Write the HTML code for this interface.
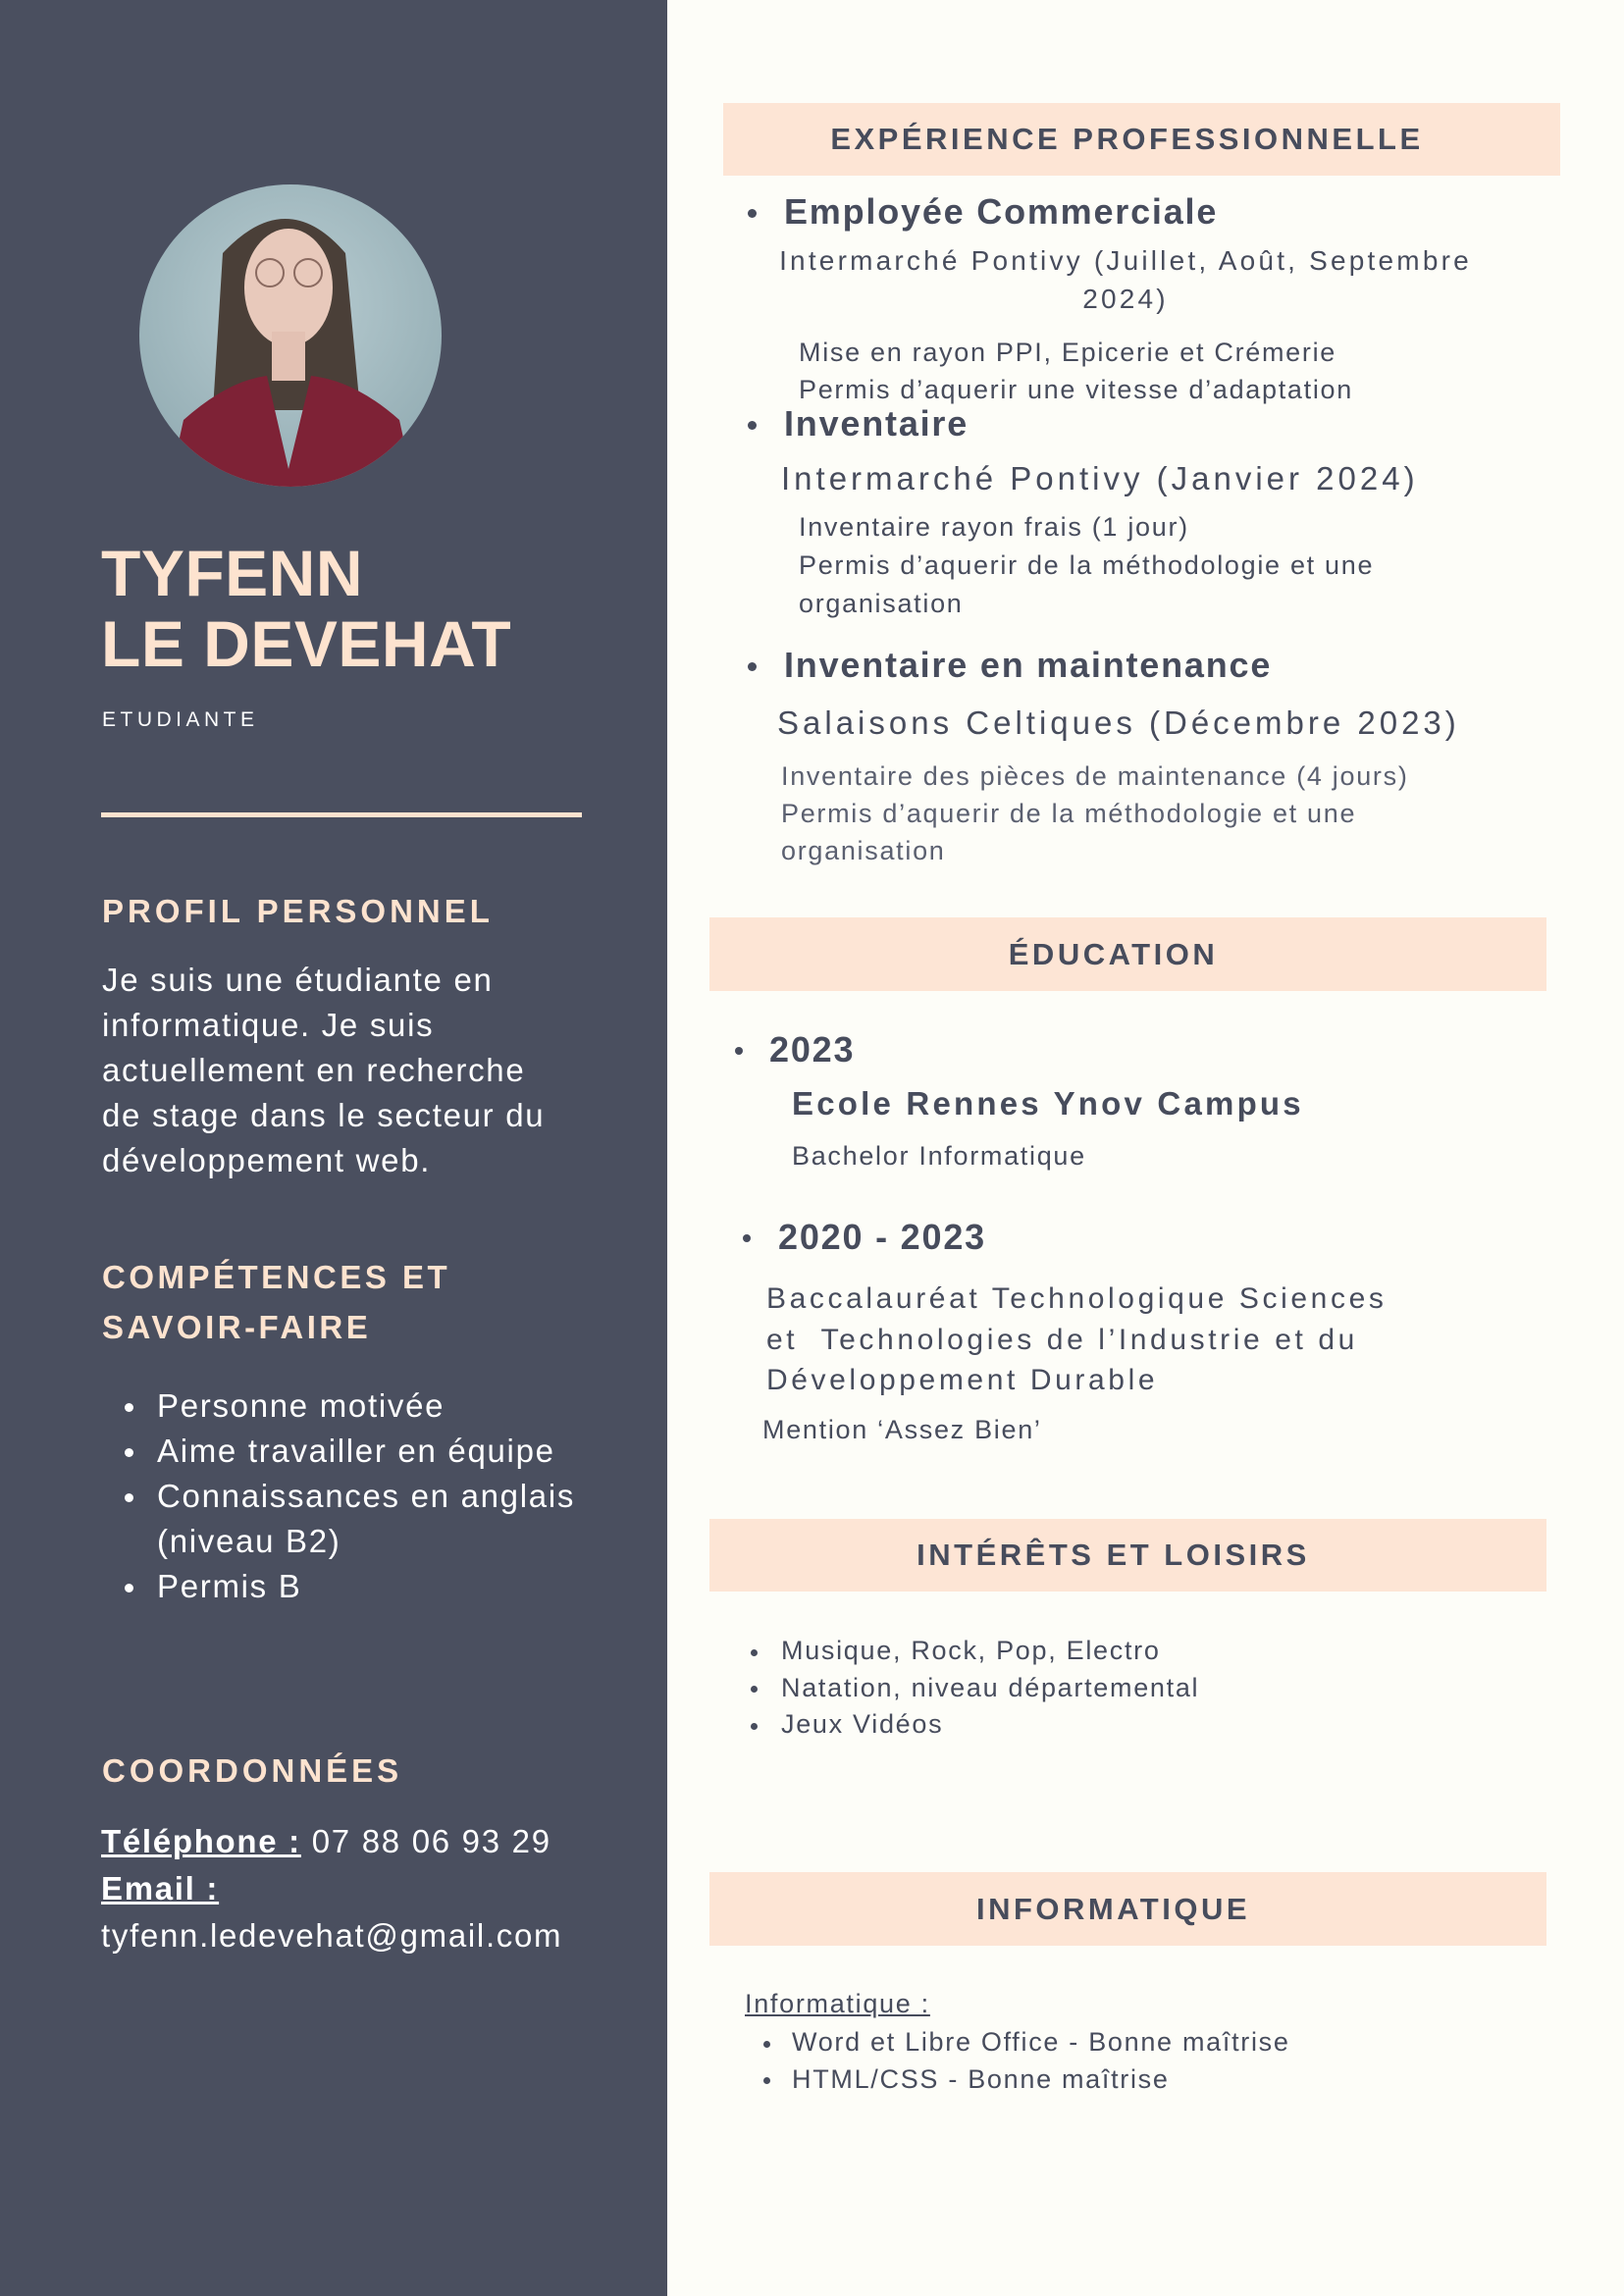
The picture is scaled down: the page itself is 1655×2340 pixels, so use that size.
<!DOCTYPE html>
<html><head><meta charset="utf-8"><style>
*{margin:0;padding:0;box-sizing:border-box}
body{width:1655px;height:2340px;background:#fdfdf8;position:relative;overflow:hidden;font-family:"Liberation Sans",sans-serif;color:#474c5c}
#side{position:absolute;left:0;top:0;width:680px;height:2340px;background:#4a4f5f}
.a{position:absolute;white-space:nowrap}
.t{letter-spacing:1.7px}
.pk{color:#fde3cf}
.w{color:#fff}
.band{position:absolute;background:#fde5d5;text-align:center;font-weight:bold;font-size:31px;letter-spacing:3.5px;color:#474c5c;padding-right:30px}
.h{font-weight:bold;font-size:36px;letter-spacing:1.8px}
.dot{position:absolute;width:9px;height:9px;border-radius:50%;background:#474c5c}
</style></head><body>
<div id="side"></div>
<svg class="a" style="left:142px;top:188px" width="308" height="308" viewBox="0 0 308 308">
<defs><clipPath id="c"><circle cx="154" cy="154" r="154"/></clipPath>
<radialGradient id="g" cx="0.5" cy="0.4" r="0.7"><stop offset="0" stop-color="#b9cdd2"/><stop offset="1" stop-color="#8fa9b0"/></radialGradient></defs>
<g clip-path="url(#c)">
<rect width="308" height="308" fill="url(#g)"/>
<path d="M85 70 Q150 0 210 70 L225 230 L75 230 Z" fill="#4a3f38"/>
<ellipse cx="152" cy="105" rx="45" ry="60" fill="#e8c9bb"/>
<rect x="135" y="150" width="34" height="50" fill="#e3c1b3"/>
<path d="M30 308 L45 240 Q90 200 130 195 L152 290 L175 195 Q220 200 265 240 L280 308 Z" fill="#7e2236"/>
<circle cx="133" cy="90" r="14" fill="none" stroke="#8a6a60" stroke-width="2"/>
<circle cx="172" cy="90" r="14" fill="none" stroke="#8a6a60" stroke-width="2"/>
</g></svg>
<div class="a pk" style="left:103px;top:548px;font-size:66px;font-weight:bold;line-height:72px;letter-spacing:0.5px">TYFENN<br>LE DEVEHAT</div>
<div class="a w" style="left:104px;top:722px;font-size:21px;letter-spacing:4.5px">ETUDIANTE</div>
<div class="a" style="left:103px;top:828px;width:490px;height:5px;background:#fde3cf"></div>
<div class="a pk" style="left:104px;top:910px;font-size:33px;font-weight:bold;letter-spacing:4px">PROFIL PERSONNEL</div>
<div class="a w t" style="left:104px;top:976px;font-size:33px;line-height:46px">Je suis une étudiante en<br>informatique. Je suis<br>actuellement en recherche<br>de stage dans le secteur du<br>développement web.</div>
<div class="a pk" style="left:104px;top:1276px;font-size:33px;font-weight:bold;letter-spacing:3.5px;line-height:51px">COMPÉTENCES ET<br>SAVOIR-FAIRE</div>
<div class="a w t" style="left:160px;top:1410px;font-size:33px;line-height:46px">Personne motivée<br>Aime travailler en équipe<br>Connaissances en anglais<br>(niveau B2)<br>Permis B</div>
<div class="a" style="left:127px;top:1430px;width:9px;height:9px;border-radius:50%;background:#fff"></div>
<div class="a" style="left:127px;top:1476px;width:9px;height:9px;border-radius:50%;background:#fff"></div>
<div class="a" style="left:127px;top:1522px;width:9px;height:9px;border-radius:50%;background:#fff"></div>
<div class="a" style="left:127px;top:1614px;width:9px;height:9px;border-radius:50%;background:#fff"></div>
<div class="a pk" style="left:104px;top:1786px;font-size:33px;font-weight:bold;letter-spacing:4px">COORDONNÉES</div>
<div class="a w t" style="left:103px;top:1853px;font-size:33px;line-height:48px"><b><u>Téléphone :</u></b> 07 88 06 93 29<br><b><u>Email :</u></b><br>tyfenn.ledevehat@gmail.com</div>

<div class="band" style="left:737px;top:105px;width:853px;height:74px;line-height:74px">EXPÉRIENCE PROFESSIONNELLE</div>
<div class="dot" style="left:762px;top:213px"></div>
<div class="a h" style="left:799px;top:195px">Employée Commerciale</div>
<div class="a" style="left:737px;top:246px;width:820px;text-align:center;font-size:28px;letter-spacing:3.2px;line-height:39px;white-space:normal">Intermarché Pontivy (Juillet, Août, Septembre<br>2024)</div>
<div class="a t" style="left:814px;top:340px;font-size:27px;line-height:38px">Mise en rayon PPI, Epicerie et Crémerie<br>Permis d’aquerir une vitesse d’adaptation</div>
<div class="dot" style="left:762px;top:429px"></div>
<div class="a h" style="left:799px;top:411px">Inventaire</div>
<div class="a" style="left:796px;top:469px;font-size:33px;letter-spacing:4px">Intermarché Pontivy (Janvier 2024)</div>
<div class="a t" style="left:814px;top:518px;font-size:27px;line-height:39px">Inventaire rayon frais (1 jour)<br>Permis d’aquerir de la méthodologie et une<br>organisation</div>
<div class="dot" style="left:762px;top:675px"></div>
<div class="a h" style="left:799px;top:657px">Inventaire en maintenance</div>
<div class="a" style="left:792px;top:718px;font-size:33px;letter-spacing:4px">Salaisons Celtiques (Décembre 2023)</div>
<div class="a t" style="left:796px;top:772px;font-size:27px;line-height:38px;color:#5b6070">Inventaire des pièces de maintenance (4 jours)<br>Permis d’aquerir de la méthodologie et une<br>organisation</div>

<div class="band" style="left:723px;top:935px;width:853px;height:75px;line-height:75px">ÉDUCATION</div>
<div class="dot" style="left:749px;top:1067px;width:8px;height:8px"></div>
<div class="a h" style="left:784px;top:1049px">2023</div>
<div class="a" style="left:807px;top:1106px;font-size:33px;font-weight:bold;letter-spacing:3.2px">Ecole Rennes Ynov Campus</div>
<div class="a t" style="left:807px;top:1163px;font-size:27px">Bachelor Informatique</div>
<div class="dot" style="left:757px;top:1258px;width:8px;height:8px"></div>
<div class="a h" style="left:793px;top:1240px">2020 - 2023</div>
<div class="a" style="left:781px;top:1303px;font-size:30px;letter-spacing:3.6px;line-height:41.5px">Baccalauréat Technologique Sciences<br>et&nbsp; Technologies de l’Industrie et du<br>Développement Durable</div>
<div class="a t" style="left:777px;top:1442px;font-size:27px">Mention ‘Assez Bien’</div>

<div class="band" style="left:723px;top:1548px;width:853px;height:74px;line-height:74px">INTÉRÊTS ET LOISIRS</div>
<div class="a t" style="left:796px;top:1664px;font-size:27px;line-height:37.5px">Musique, Rock, Pop, Electro<br>Natation, niveau départemental<br>Jeux Vidéos</div>
<div class="dot" style="left:765px;top:1681px;width:7px;height:7px"></div>
<div class="dot" style="left:765px;top:1718px;width:7px;height:7px"></div>
<div class="dot" style="left:765px;top:1756px;width:7px;height:7px"></div>

<div class="band" style="left:723px;top:1908px;width:853px;height:75px;line-height:75px">INFORMATIQUE</div>
<div class="a t" style="left:759px;top:2027px;font-size:27px"><u>Informatique :</u></div>
<div class="a t" style="left:807px;top:2063px;font-size:27px;line-height:37.5px">Word et Libre Office - Bonne maîtrise<br>HTML/CSS - Bonne maîtrise</div>
<div class="dot" style="left:778px;top:2080px;width:7px;height:7px"></div>
<div class="dot" style="left:778px;top:2117px;width:7px;height:7px"></div>
</body></html>
